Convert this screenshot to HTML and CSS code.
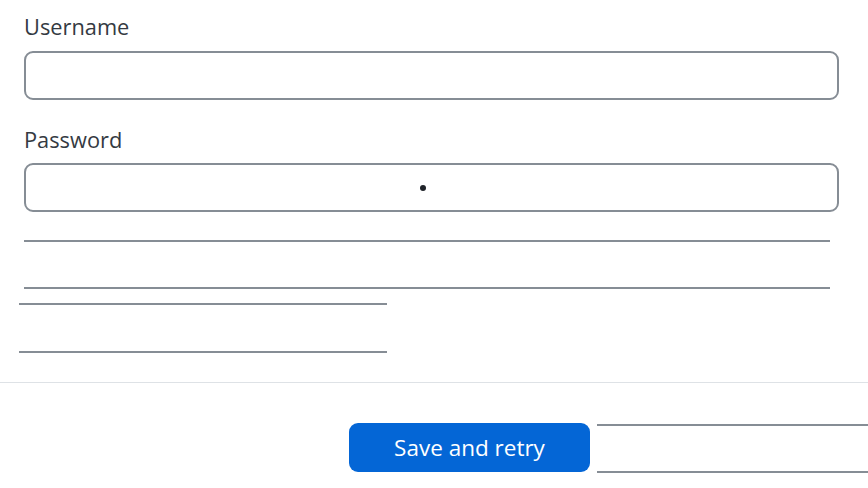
FILE: index.html
```html
<!DOCTYPE html>
<html lang="en">
<head>
  <meta charset="UTF-8">
  <title>Save and retry</title>
  <link rel="stylesheet" href="styles.css">
</head>
<body>
<main class="main">
  <form class="form">
    <label class="label label-first" for="username">Username</label>
    <div class="field" id="username"></div>

    <label class="label" for="password">Password</label>
    <div class="field field-password" id="password">
      <span class="dot"></span>
    </div>

    <div class="ghost ghost-wide"></div>
    <div class="ghost ghost-narrow"></div>
  </form>

  <hr class="divider">

  <div class="footer">
    <button class="btn" type="button">Save and retry</button>
    <div class="ghost ghost-side"></div>
  </div>
</main>
</body>
</html>
```

FILE: styles.css
```css
* {
  margin: 0;
  padding: 0;
  box-sizing: border-box;
}

body {
  background: #fff;
  font-family: "Open Sans", "Noto Sans", sans-serif;
  color: #343a42;
  overflow: hidden;
}

.main {
  width: 868px;
  height: 488px;
}

.form {
  padding: 0 30px 0 24px;
}

.label {
  display: block;
  font-size: 21.8px;
  line-height: 28px;
  margin-top: 26px;
  margin-bottom: 9px;
}

.label-first {
  margin-top: 13px;
  margin-bottom: 10px;
}

.field {
  width: 815px;
  height: 49px;
  border: 2px solid #868d95;
  border-radius: 9px;
  background: #fff;
  display: flex;
  align-items: center;
}

.field-password {
  padding-left: 394px;
}

.dot {
  width: 6px;
  height: 6px;
  border-radius: 50%;
  background: #1f2329;
}

.ghost {
  height: 50px;
  border-top: 2px solid #868d95;
  border-bottom: 2px solid #868d95;
}

.ghost-wide {
  width: 806px;
  height: 49px;
  margin-top: 28px;
}

.ghost-narrow {
  width: 368px;
  margin-top: 14px;
  margin-left: -5px;
}

.divider {
  border: none;
  border-top: 1px solid #dee2e6;
  margin-top: 29px;
}

.footer {
  display: flex;
  justify-content: flex-end;
  align-items: flex-start;
  gap: 7px;
  margin-top: 40px;
}

.btn {
  width: 241px;
  height: 49px;
  border: none;
  border-radius: 9px;
  background: #0466d6;
  color: #fff;
  font-family: "Open Sans", "Noto Sans", sans-serif;
  font-size: 22.5px;
}

.ghost-side {
  width: 271px;
  height: 49px;
  margin-top: 1px;
}
```
